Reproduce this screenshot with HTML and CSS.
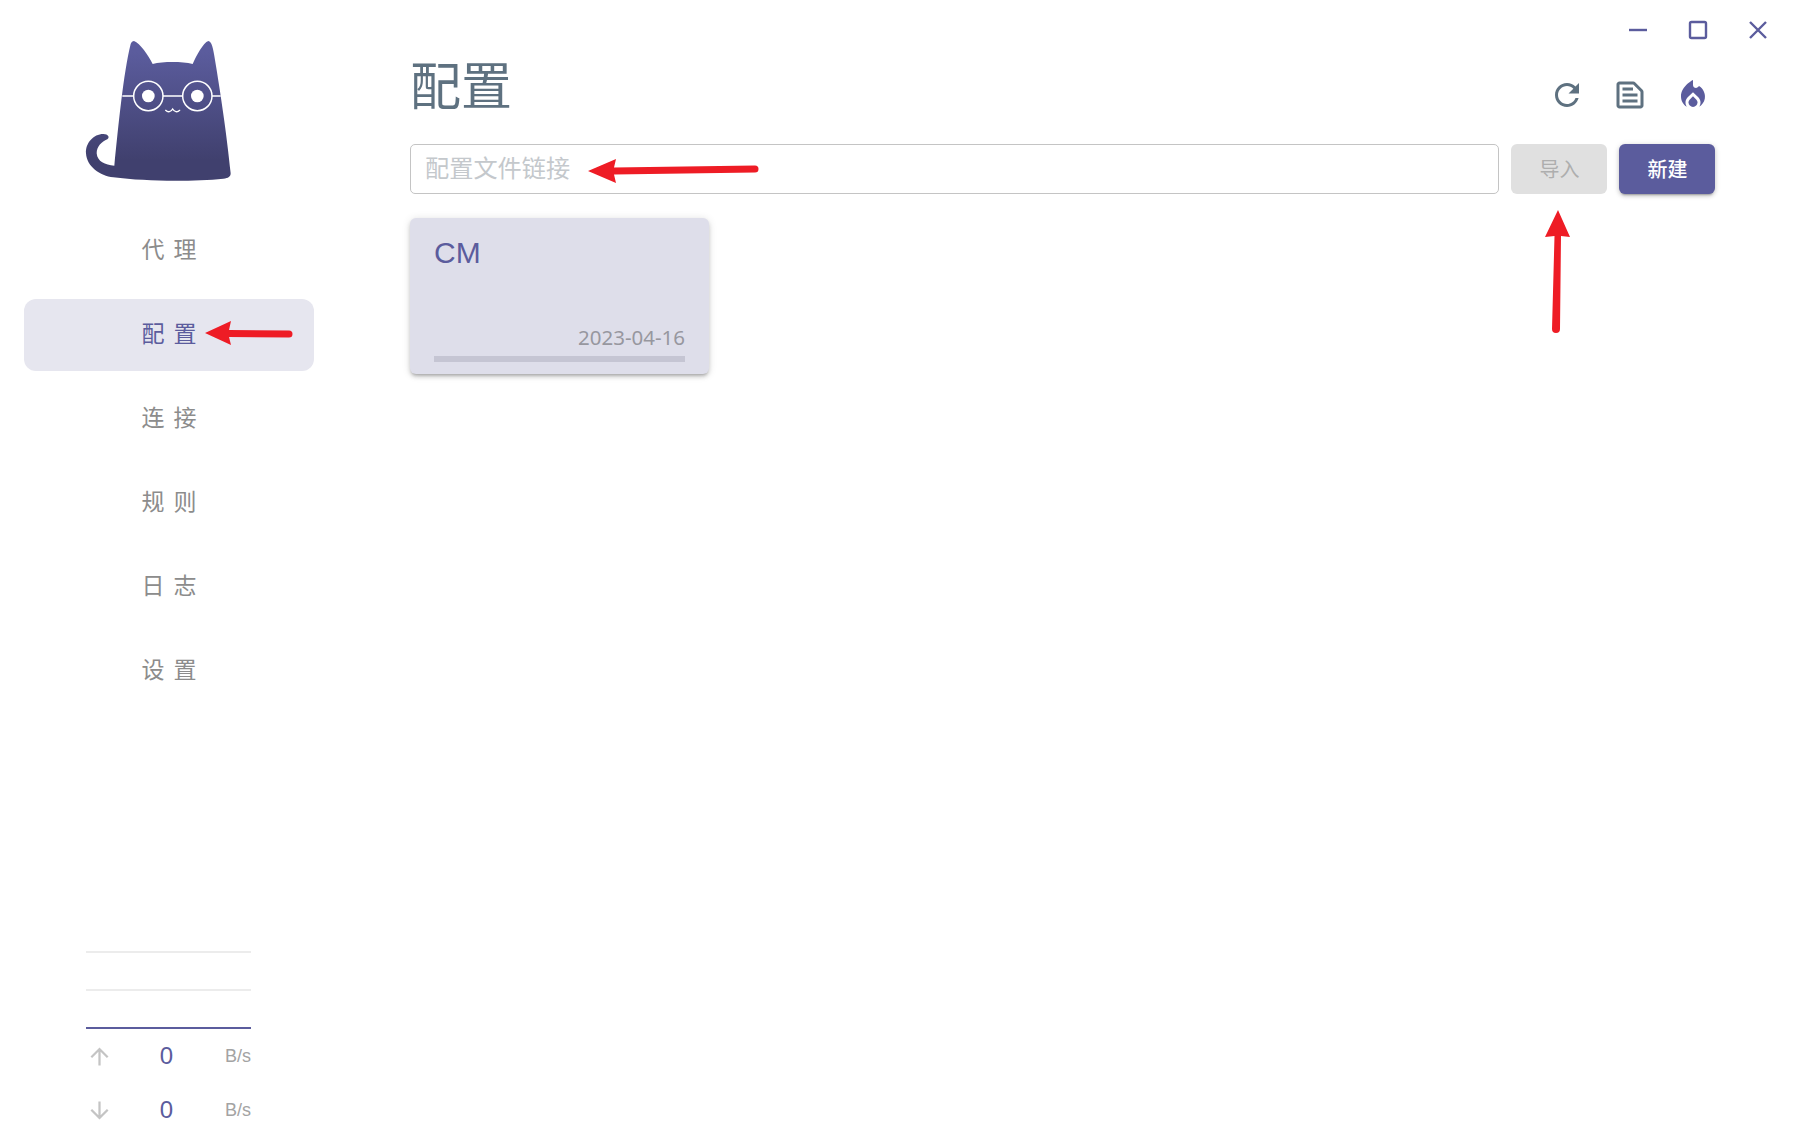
FILE: index.html
```html
<!DOCTYPE html>
<html lang="zh-CN">
<head>
<meta charset="utf-8">
<title>配置</title>
<link rel="stylesheet" href="styles.css">
</head>
<body>
<div class="app">
  <aside class="sidebar">
    <svg class="logo" viewBox="0 0 600 540" width="200" height="180" aria-hidden="true">
      <defs>
        <linearGradient id="catfill" x1="0" y1="0" x2="0" y2="1">
          <stop offset="0.08" stop-color="#5b5c9d"/>
          <stop offset="0.85" stop-color="#40406e"/>
        </linearGradient>
      </defs>
      <path fill="url(#catfill)" d="M222 63C240 70 265 105 278 132C310 124 365 124 398 132C410 105 430 68 445 63C455 64 460 85 465 120C480 210 500 340 512 460C512 470 505 475 490 476C400 485 260 485 160 472C120 468 80 440 78 400C76 370 100 342 130 342C145 342 150 352 142 358C125 365 110 380 110 400C112 425 135 435 163 437C175 320 190 160 212 72C214 66 218 63 222 63Z"/>
      <g fill="none" stroke="#fff" stroke-width="4.5">
        <circle cx="265" cy="228" r="44"/>
        <circle cx="412" cy="228" r="44"/>
        <path d="M187 228H221M309 228H368M456 228H482"/>
        <path stroke-width="4" stroke-linecap="round" d="M317 271C324 278 333 276 338 267C343 276 352 278 359 271"/>
      </g>
      <circle cx="265" cy="228" r="19" fill="#fff"/>
      <circle cx="412" cy="228" r="19" fill="#fff"/>
    </svg>
    <nav class="nav">
      <a class="nav-item">代理</a>
      <a class="nav-item active">配置</a>
      <a class="nav-item">连接</a>
      <a class="nav-item">规则</a>
      <a class="nav-item">日志</a>
      <a class="nav-item">设置</a>
    </nav>
    <div class="traffic">
      <div class="chart"><i></i><i></i><i class="now"></i></div>
      <div class="rate">
        <svg class="rate-icon" viewBox="0 0 24 24"><path d="M4 12l1.41 1.41L11 7.83V20h2V7.83l5.58 5.59L20 12l-8-8-8 8z"/></svg>
        <span class="rate-value">0</span>
        <span class="rate-unit">B/s</span>
      </div>
      <div class="rate">
        <svg class="rate-icon" viewBox="0 0 24 24"><path d="M20 12l-1.41-1.41L13 16.17V4h-2v12.17l-5.58-5.59L4 12l8 8 8-8z"/></svg>
        <span class="rate-value">0</span>
        <span class="rate-unit">B/s</span>
      </div>
    </div>
  </aside>
  <main class="main">
    <div class="winbar">
      <button class="win-btn"><svg viewBox="0 0 24 24"><path d="M3 12H21"/></svg></button>
      <button class="win-btn"><svg viewBox="0 0 24 24"><rect x="4" y="4" width="16" height="16" rx="1.5"/></svg></button>
      <button class="win-btn"><svg viewBox="0 0 24 24"><path d="M4 4L20 20M20 4L4 20"/></svg></button>
    </div>
    <div class="content">
      <header class="header">
        <h1 class="title">配置</h1>
        <div class="actions">
          <svg class="action gray" viewBox="0 0 24 24"><path d="M17.65 6.35C16.2 4.9 14.21 4 12 4c-4.42 0-7.99 3.58-7.99 8s3.57 8 7.99 8c3.73 0 6.84-2.55 7.73-6h-2.08c-.82 2.33-3.04 4-5.65 4-3.31 0-6-2.69-6-6s2.69-6 6-6c1.66 0 3.14.69 4.22 1.78L13 11h7V4l-2.35 2.35z"/></svg>
          <svg class="action gray" viewBox="0 0 24 24"><path d="M14.17 5L19 9.83V19H5V5h9.17m0-2H5c-1.1 0-2 .9-2 2v14c0 1.1.9 2 2 2h14c1.1 0 2-.9 2-2V9.83c0-.53-.21-1.04-.59-1.41l-4.83-4.83c-.37-.38-.88-.59-1.41-.59zM7 15h10v2H7v-2zm0-4h10v2H7v-2zm0-4h7v2H7V7z"/></svg>
          <svg class="action purple" viewBox="0 0 24 24"><path d="M12 12.9l-2.13 2.09C9.31 15.55 9 16.28 9 17.06 9 18.68 10.35 20 12 20s3-1.32 3-2.94c0-.78-.31-1.52-.87-2.07L12 12.9z"/><path d="M16 6l-.44.55C14.38 8.02 12 7.19 12 5.3V2S4 6 4 13c0 2.92 1.56 5.47 3.89 6.86-.56-.79-.89-1.76-.89-2.8 0-1.32.52-2.56 1.47-3.5L12 10.1l3.53 3.47c.95.93 1.47 2.17 1.47 3.5 0 1.02-.31 1.96-.85 2.75 1.89-1.15 3.29-3.06 3.71-5.3.66-3.48-1.08-6.76-3.86-8.52z"/></svg>
        </div>
      </header>
      <div class="toolbar">
        <input class="url" type="text" placeholder="配置文件链接">
        <button class="btn disabled">导入</button>
        <button class="btn primary">新建</button>
      </div>
      <section class="card">
        <div class="card-name">CM</div>
        <div class="card-date">2023-04-16</div>
        <div class="card-bar"></div>
      </section>
    </div>
  </main>
</div>
<svg class="arrows" viewBox="0 0 1800 1140" width="1800" height="1140" aria-hidden="true">
  <g fill="#ee1c25">
    <path d="M588 171L616 159L614 167.5L755 165.5A3.5 3.5 0 0 1 755 172.5L614 174.5L616 183Z"/>
    <path d="M205 333L231 321L229 330L289 330.5A3.5 3.5 0 0 1 289 337.5L229 337L231 345Z"/>
    <path d="M1558 210L1570 237L1561 236L1560 329A3.5 3.5 0 0 1 1552 329L1554.5 236L1545 237Z"/>
  </g>
</svg>
</body>
</html>
```
FILE: styles.css
```css
* { box-sizing: border-box; }
html, body { margin: 0; height: 100%; background: #fff; overflow: hidden; }
body { font-family: "Noto Sans", "Noto Sans CJK SC", sans-serif; color: #333; position: relative; }

.app { display: flex; height: 1140px; }

.sidebar { width: 338px; flex: none; display: flex; flex-direction: column; padding: 20px 24px 3px; }
.logo { display: block; margin-left: 36px; flex: none; }

.nav { display: flex; flex-direction: column; gap: 12px; margin-top: 15px; }
.nav-item {
  height: 72px; padding-bottom: 6px; display: flex; align-items: center; justify-content: center;
  border-radius: 12px; font: 23px/1 "Noto Sans CJK SC", sans-serif;
  letter-spacing: 9px; text-indent: 9px; color: #8c8c8c;
}
.nav-item.active { background: #e6e6ef; color: #5b5c9d; }

.traffic { margin-top: auto; padding: 0 63px 0 62px; }
.chart i { display: block; height: 38px; border-bottom: 2px solid #ececec; }
.chart i:first-child { height: 2px; }
.chart i.now { border-bottom-color: #5b5c9d; }

.rate { display: grid; grid-template-columns: 28px 104px 33px; height: 54px; align-items: center; }
.rate-icon { width: 27px; height: 27px; fill: #c4c4c4; justify-self: center; margin-left: -2px; }
.rate-value { text-align: center; font: 24px/1 "Liberation Sans", sans-serif; color: #5b5c9d; padding-left: 1px; }
.rate-unit { text-align: right; font: 18px/1 "Liberation Sans", sans-serif; color: #a3a3a3; white-space: nowrap; }

.main { flex: 1; min-width: 0; display: flex; flex-direction: column; }

.winbar { display: flex; justify-content: flex-end; height: 52px; padding: 18px 12px 0 0; }
.win-btn { width: 60px; height: 24px; padding: 0; border: 0; background: none; display: flex; justify-content: center; }
.win-btn svg { width: 24px; height: 24px; fill: none; stroke: #5b5c9d; stroke-width: 2.4; }

.content { padding: 0 85px 0 72px; }

.header { display: flex; justify-content: space-between; align-items: flex-start; height: 92px; }
.title { margin: -4px 0 0; font: 400 51px/70px "Noto Sans CJK SC", sans-serif; color: #5e7180; }
.actions { display: flex; gap: 27px; margin-top: 25px; padding-right: 4px; }
.action { width: 36px; height: 36px; display: block; }
.action.gray { fill: #5e7180; }
.action.purple { fill: #5b5c9d; }

.toolbar { display: flex; gap: 12px; height: 50px; }
.url {
  flex: 1; min-width: 0; height: 50px; padding: 0 14px 6px; border: 1px solid #c4c4c4; border-radius: 5px;
  font: 24.2px "Noto Sans CJK SC", sans-serif; color: #333; outline: none; background: #fff;
}
.url::placeholder { color: #c4c8cc; opacity: 1; }
.btn {
  width: 96px; height: 50px; padding: 0 0 1px 1px; border: 0; border-radius: 6px;
  font: 500 20px/1 "Noto Sans CJK SC", sans-serif;
}
.btn.disabled { background: #e0e0e0; color: #aeaeae; font-weight: 400; }
.btn.primary { background: #5b5c9d; color: #fff; box-shadow: 0 3px 2px -2px rgba(0,0,0,.25), 0 2px 4px 0 rgba(0,0,0,.14), 0 1px 6px 0 rgba(0,0,0,.12); }

.card {
  width: 299px; height: 156px; margin-top: 24px; padding: 18px 24px 12px;
  display: flex; flex-direction: column; border-radius: 6px; background: #dedeea;
  box-shadow: 0 3px 3px -2px rgba(0,0,0,.2), 0 3px 4px 0 rgba(0,0,0,.14), 0 1px 8px 0 rgba(0,0,0,.12);
}
.card-name { font: 30px/34px "Liberation Sans", sans-serif; color: #5b5c9d; }
.card-date { margin-top: auto; margin-bottom: 4px; text-align: right; font: 20.5px/29px "Noto Sans", sans-serif; color: #97979f; }
.card-bar { height: 6px; background: #c5c5d3; }

.arrows { position: absolute; left: 0; top: 0; pointer-events: none; }
```
